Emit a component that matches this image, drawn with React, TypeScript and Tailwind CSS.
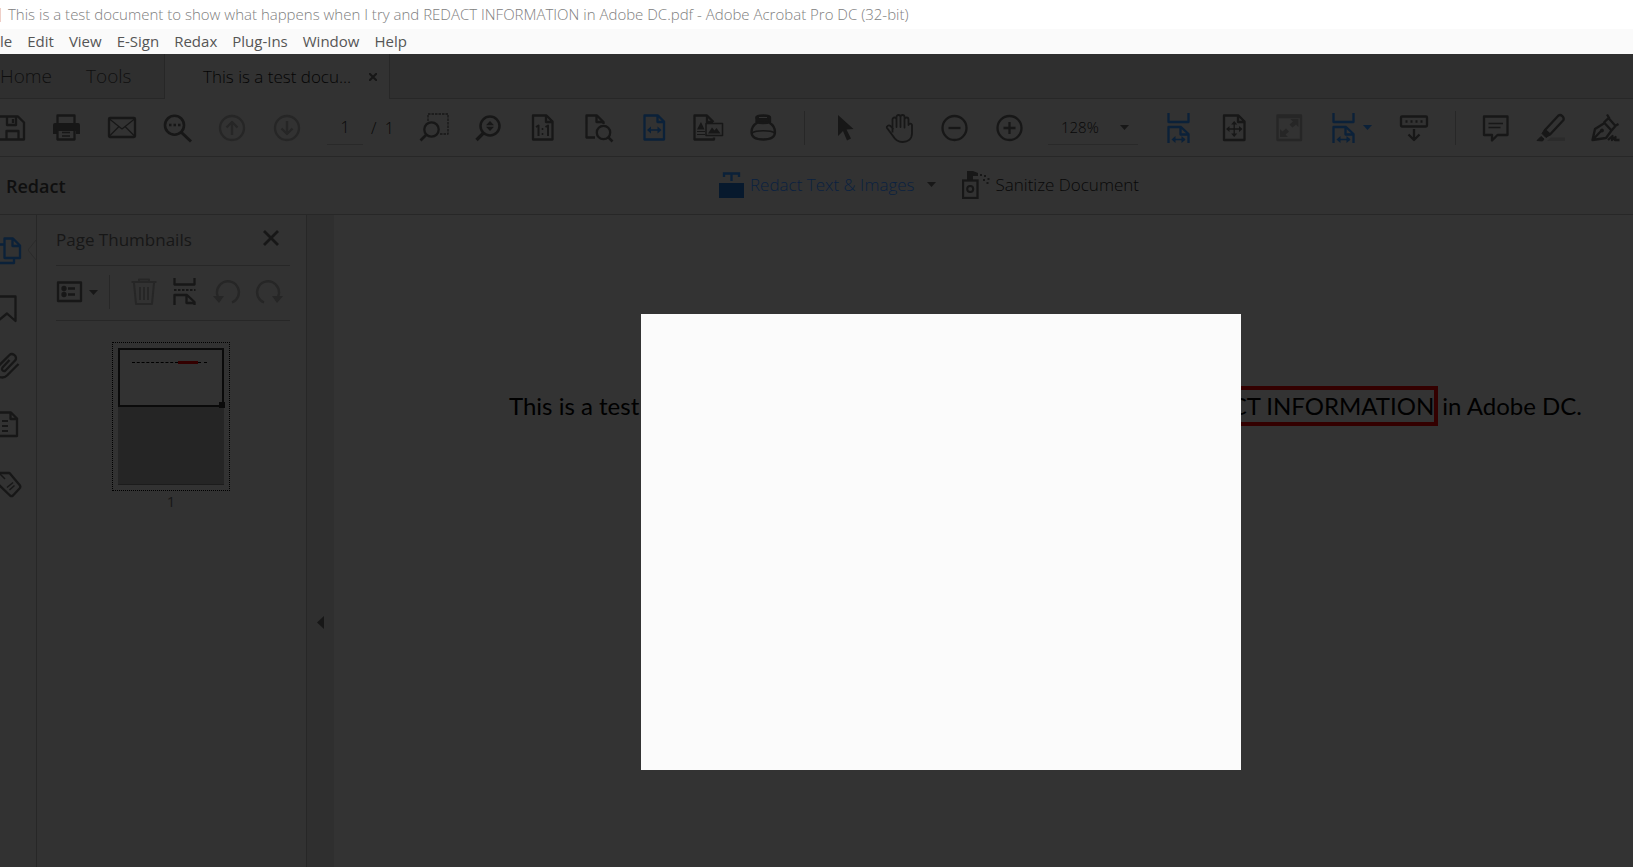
import React from "react";

interface IconProps {
  children: React.ReactNode;
  className?: string;
}

interface ToolProps extends IconProps {
  label: string;
  disabled?: boolean;
}

// Shared 32px line icon
const Icon: React.FC<IconProps> = ({ children, className = "" }) => (
  <svg
    className={`size-8 shrink-0 ${className}`}
    viewBox="0 0 32 32"
    fill="none"
    stroke="currentColor"
    strokeWidth="2.300"
    strokeLinejoin="round"
    aria-hidden="true"
  >
    {children}
  </svg>
);

const Tool: React.FC<ToolProps> = ({ label, children, className = "text-[#171717]", disabled }) => (
  <button type="button" aria-label={label} disabled={disabled} className={`flex w-[55px] shrink-0 items-center justify-center ${className}`}>
    <Icon>{children}</Icon>
  </button>
);

const Caret: React.FC<{ className?: string }> = ({ className = "text-[#171717]" }) => (
  <svg className={`h-[5px] w-[9px] shrink-0 ${className}`} viewBox="0 0 9 5" fill="currentColor" aria-hidden="true">
    <path d="M0 0h9L4.500 5z" />
  </svg>
);

const Divider = () => (
  <div className="flex w-[26px] shrink-0 items-center justify-center">
    <div className="h-[34px] w-px bg-[#272727]" />
  </div>
);

// Page cut by a break above it, used by both scrolling modes
const scrollPage = (
  <>
    <path d="M5.500 1v9h20V1M5.500 31V15H18l7.500 7V31M17.500 15v7.500h8" />
    <path d="M10 27.500h12" strokeWidth="1.500" />
    <path d="M8.500 27.500l4-3.500v7zM22.500 27.500l-4-3.500v7z" fill="currentColor" stroke="none" />
  </>
);

const menus = ["Edit", "View", "E-Sign", "Redax", "Plug-Ins", "Window", "Help"];

const TitleBar = () => (
  <header className="bg-white">
    <div className="flex h-[29px] items-center overflow-hidden whitespace-nowrap text-[15px] font-light text-[#808080]">
      <div className="h-[14px] w-px shrink-0 bg-[#efcfc8]" />
      <h1 className="ml-[7px]">
        This is a test document to show what happens when I try and REDACT INFORMATION in Adobe DC.pdf - Adobe Acrobat Pro DC (32-bit)
      </h1>
    </div>
    <nav className="flex h-[25px] items-center gap-[15px] overflow-hidden bg-[#fafafa] text-[15px] text-[#555]">
      <button type="button" aria-label="File">le</button>
      {menus.map((menu) => (
        <button type="button" key={menu} className="whitespace-nowrap">{menu}</button>
      ))}
    </nav>
  </header>
);

const Tabs = () => (
  <div className="flex h-[45px] bg-[#2f2f2f]">
    <div className="flex w-[165px] shrink-0 items-center gap-[34px] border-r border-b border-[#272727] text-[19px] font-light text-[#0f0f0f]">
      <button type="button">Home</button>
      <button type="button">Tools</button>
    </div>
    <div className="flex w-[224px] shrink-0 items-center justify-between bg-[#323232] pr-3 pl-[38px] text-[#050505]">
      <button type="button" className="whitespace-nowrap text-[17px] font-light">This is a test docu...</button>
      <button type="button" aria-label="Close tab">
        <svg className="size-2" viewBox="0 0 8 8" stroke="#171717" strokeWidth="2" aria-hidden="true">
          <path d="M0 0l8 8M8 0L0 8" />
        </svg>
      </button>
    </div>
    <div className="flex-1 border-b border-l border-[#272727]" />
  </div>
);

const Toolbar = () => (
  <div className="flex h-[58px] overflow-hidden border-b border-[#272727]">
    <div className="-ml-4 flex">
      <Tool label="Save">
        <path d="M2 4.500h20l6 6v17H2zM11 4.500V13h9V4.500M10.500 27.500V19h12v8.500" />
        <path d="M17 7v4" />
      </Tool>
      <Tool label="Print">
        <path d="M6.500 12V3.500h17V12" />
        <path d="M4 11h23a2 2 0 0 1 2 2v9h-4v-3H7v3H2v-9a2 2 0 0 1 2-2z" fill="currentColor" stroke="none" />
        <path d="M6.500 17v10.500h17V17" />
        <path d="M11 20.500h8M11 24h8" strokeWidth="1.500" />
      </Tool>
      <Tool label="Send by email">
        <rect x="3" y="6" width="26" height="19" rx="1" />
        <path d="M3.500 7L16 17 28.500 7M3.500 24l9.500-9.500M28.500 24L19 14.500" strokeWidth="1.200" />
      </Tool>
      <Tool label="Find">
        <circle cx="13.500" cy="13.200" r="9.500" strokeWidth="2.600" />
        <path d="M20.500 20.500l9.500 9" strokeWidth="3" />
        <path d="M8 13h2.500M12.500 13H15M17 13h2.500" strokeWidth="2.500" />
      </Tool>
      <Tool label="Previous page" disabled className="text-[#262626]">
        <circle cx="16" cy="16" r="12" />
        <path d="M16 23V10M10.500 15.500L16 10l5.500 5.500" />
      </Tool>
      <Tool label="Next page" disabled className="text-[#262626]">
        <circle cx="16" cy="16" r="12" />
        <path d="M16 9v13M10.500 16.500L16 22l5.500-5.500" />
      </Tool>
    </div>
    <div className="flex w-[92px] shrink-0 items-center gap-2 pl-[13px] text-base font-light text-[#080808]">
      <input aria-label="Page number" defaultValue="1" className="h-[34px] w-9 border-b border-[#292929] text-center" />
      <span className="whitespace-pre">/  1</span>
    </div>
    <Tool label="Marquee zoom">
      <path d="M10 9V2h20v20h-8" strokeWidth="1.300" strokeDasharray="2.500 1" />
      <circle cx="13.500" cy="17.500" r="7.200" />
      <path d="M8.500 22.500L2.500 28.500" strokeWidth="2.600" />
    </Tool>
    <Tool label="Dynamic zoom">
      <circle cx="17" cy="14" r="9.500" strokeWidth="2.500" />
      <path d="M10.500 21L3.500 28" strokeWidth="3.200" />
      <path d="M17 9l4 4.200h-8zM17 19l4-4.200h-8z" fill="currentColor" stroke="none" />
    </Tool>
    <Tool label="Actual size">
      <path d="M5 3.500h13.500l6 6v18H5zM18 3.500V10h6.500" />
      <path d="M8 15l2.500-1.500V24M17.500 15l2.500-1.500V24" strokeWidth="2" />
      <path d="M14.500 16v2M14.500 21v2" strokeWidth="1.500" />
    </Tool>
    <Tool label="Zoom to page level">
      <path d="M12 25.500H3.500v-22H14l6.500 6.500v2M13.500 3.500V10H20" />
      <circle cx="20.500" cy="20.500" r="6.700" />
      <path d="M25 25l4.500 4.500" strokeWidth="2.500" />
    </Tool>
    <Tool label="Fit width" className="text-[#0b2139]">
      <path d="M6.500 3.500H20l6 6v18H6.500zM19.500 3.500V10H26" />
      <path d="M11 18h10.500" strokeWidth="1.500" />
      <path d="M9 18l4-3.500v7zM23.500 18l-4-3.500v7z" fill="currentColor" stroke="none" />
    </Tool>
    <Tool label="Reflow">
      <path d="M21 25.500v2H1.500v-24H14l6.500 6.500M14 3.500V10h6" />
      <path d="M4 17.500L8 10l3.500 7.500z" fill="currentColor" stroke="none" />
      <path d="M4 19.500h8M4 22.500h8" strokeWidth="1.200" />
      <rect x="13" y="11.500" width="16.500" height="12" strokeWidth="1.500" />
      <path d="M15 21.500l4-6 2.500 3 2-2.500 4 5.500z" fill="currentColor" stroke="none" />
    </Tool>
    <Tool label="Ink">
      <ellipse cx="15.200" cy="5.500" rx="6.700" ry="2" />
      <path d="M8.500 5.500V10c3 1.500 10.500 1.500 13.500 0V5.500z" fill="currentColor" />
      <path d="M9.500 10.500C5 13 3.500 16 3.500 20c0 5 4 7.500 11.700 7.500S27 25 27 20c0-4-1.500-7-6-9.500" />
      <path d="M4 21c4-3 18.500-3 23 0" strokeWidth="1.500" />
      <path d="M11 5.500h8" stroke="#323232" strokeWidth="1" />
    </Tool>
    <Divider />
    <Tool label="Select">
      <path d="M9 3l15.500 14-7 .5 4.500 9-4 2-4-9.500L9 24z" fill="currentColor" stroke="none" />
    </Tool>
    <Tool label="Hand">
      <path
        d="M8.500 20.500V7.500a2 2 0 0 1 4 0V15 5a2 2 0 0 1 4 0v10V5a2 2 0 0 1 4 0v10.500-8a2 2 0 0 1 4 0V13a1.800 1.800 0 0 1 3.500 0v8c0 6-4 9-9.500 9-5 0-7.500-2.500-9.500-6l-6-8c-1-1.500 1.500-3.500 3.500-2l3 3.500"
        strokeWidth="1.800"
      />
    </Tool>
    <Tool label="Zoom out">
      <circle cx="15.500" cy="16" r="12" />
      <path d="M9.500 16h12" />
    </Tool>
    <Tool label="Zoom in">
      <circle cx="15.500" cy="16" r="12" />
      <path d="M9.500 16h12M15.500 10v12" />
    </Tool>
    <div className="flex w-[114px] shrink-0 items-center pl-[11px]">
      <button type="button" aria-label="Zoom level" className="flex h-[34px] w-[90px] items-center justify-between border-b border-[#292929] pr-[9px] pl-[13px] text-[15px] font-light text-[#080808]">
        128%
        <Caret />
      </button>
    </div>
    <Tool label="Fit width scrolling" className="text-[#0b2139]">{scrollPage}</Tool>
    <Tool label="Fit page">
      <path d="M6 3.500h14.500l6 6V28H6zM20 3.500V10h6.500" />
      <path d="M10.500 17H22M16.200 11v12" strokeWidth="1.300" />
      <path d="M8 17l3.500-3v6zM24.500 17L21 14v6zM16.200 9l3 3.500h-6zM16.200 25l3-3.500h-6z" fill="currentColor" stroke="none" />
    </Tool>
    <Tool label="Full screen" disabled className="text-[#262626]">
      <path d="M4.500 3.500H28v24.500H4.500zM4.500 5H28" />
      <path d="M25.500 7v8L23 12.500l-3.500 3-3-3 3.500-3L17.500 7zM7 25v-8l2.500 2.500 3.500-3 3 3-3.500 3L15 25z" fill="currentColor" stroke="none" />
    </Tool>
    <button type="button" aria-label="Scrolling mode" className="flex w-[71px] shrink-0 items-center gap-[3px] pl-3 text-[#0b2139]">
      <Icon>{scrollPage}</Icon>
      <Caret className="text-[#0b2139]" />
    </button>
    <Tool label="Show toolbar below">
      <rect x="2" y="4.500" width="26" height="10" rx="1" />
      <path d="M6.500 9.500h19" strokeDasharray="2 3" />
      <path d="M15 17v11M9.500 22.500L15 28l5.500-5.500" />
    </Tool>
    <Divider />
    <Tool label="Comment">
      <path d="M4 4.500h23.500v18.500h-10L12 28.500V23H4z" />
      <path d="M8.500 11.500H23M8.500 15.500h12" strokeWidth="1.300" />
    </Tool>
    <Tool label="Highlight">
      <path d="M16 25.500h14v3.500H12z" fill="#2b2b2b" stroke="none" />
      <path d="M10 18L23.500 3.500c2.500-1.500 6 1.500 5 4.500L15 22.500z" />
      <path d="M9.500 17.500l5.500 5.500-4 2.500-4-4zM2 28.500l4-4 3 2.500-1.500 2z" fill="currentColor" strokeWidth="1" />
    </Tool>
    <Tool label="Sign">
      <path d="M2.500 28L5 17l9.500-6 7 7.500L16 26zM2.500 28l9-9.500M13.500 11l5-5 7 8-4 4.500M17 2.500l2.500 4M25 14l3.500-2" />
      <circle cx="12" cy="18.500" r="1.500" fill="currentColor" strokeWidth="1" />
      <path d="M18 28l4.500-4-.5 4 3.500-3-.5 3h4.500" />
    </Tool>
  </div>
);

const RedactBar = () => (
  <div className="flex h-[58px] items-center border-b border-[#272727] text-[17px]">
    <h2 className="w-[225px] shrink-0 pl-[6px] text-lg font-semibold text-[#0f0f0f]">Redact</h2>
    <div className="flex flex-1 items-center justify-center gap-[26px] pb-0.5 font-light whitespace-nowrap">
      <button type="button" className="flex items-center gap-[6px] text-[#0a2140]">
        <svg className="h-[26px] w-[25px]" viewBox="0 0 25 26" aria-hidden="true">
          <path d="M5 5V1.500h15V5M12.500 1.500V9" fill="none" stroke="#0b2139" strokeWidth="2.300" />
          <path d="M0 11h25v15H0z" fill="#07192d" />
        </svg>
        Redact Text &amp; Images
        <span className="pl-[6px]"><Caret /></span>
      </button>
      <button type="button" className="flex items-center gap-[6px] text-[#080808]">
        <svg className="h-7 w-7" viewBox="0 0 28 28" aria-hidden="true">
          <path d="M5 0h6l5 2v3h-5v4H5z" fill="#171717" />
          <rect x="1" y="9.500" width="14.500" height="17.500" fill="none" stroke="#171717" strokeWidth="2.300" />
          <circle cx="8.200" cy="18" r="3" fill="none" stroke="#171717" strokeWidth="2" />
          <path d="M18 4h2M22 5h2M21 9h2M25.500 8h2M24.500 12h2" stroke="#171717" strokeWidth="2" />
        </svg>
        Sanitize Document
      </button>
    </div>
  </div>
);

const Rail = () => (
  <nav className="relative flex w-[37px] shrink-0 flex-col overflow-hidden border-r border-[#272727] pt-[7px] text-[#171717]">
    <button type="button" aria-label="Page thumbnails" className="flex h-[58px] w-8 shrink-0 items-center text-[#0b2139]">
      <Icon className="-ml-2">
        <path d="M12.500 3.500H21l7 7v12.500H12.500zM20.500 3.500V11H28M12 9.500H2M22 23v5H2" />
      </Icon>
    </button>
    <button type="button" aria-label="Bookmarks" className="flex h-[58px] w-8 shrink-0 items-center">
      <Icon className="-ml-2">
        <path d="M6 3.500h17.500V28L15 20.500 6 28z" />
      </Icon>
    </button>
    <button type="button" aria-label="Attachments" className="flex h-[58px] w-8 shrink-0 items-center">
      <Icon className="-ml-2">
        <path d="M26.500 13L15 24.500C12 27.500 6.500 27 5 23.500s-1-6 1.500-8.500L17.500 4c2.500-2.500 8 .5 6 5L13.500 19.500c-2 1.500-4.500-.5-3-3l7-7.500" />
      </Icon>
    </button>
    <button type="button" aria-label="Content" className="flex h-[58px] w-8 shrink-0 items-center">
      <Icon className="-ml-2">
        <path d="M2 3.500h17l6 6V27H2zM18.500 3.500V10H25" />
        <path d="M10 12h6M10 17h6M10 22h6" strokeWidth="1.800" />
      </Icon>
    </button>
    <button type="button" aria-label="Tags" className="flex h-[58px] w-8 shrink-0 items-center">
      <Icon className="-ml-2">
        <path d="M2 10l6-4h9.500L28 18.500c.5 1 .5 2-.5 3L21 28.500c-1 .8-2 .8-3 0L2 13" />
        <path d="M8 7l5 5M15 20.500l6-5M17.500 23l5-4.500" strokeWidth="1.500" />
      </Icon>
    </button>
    <svg className="absolute top-[25px] right-0 h-5 w-2" viewBox="0 0 8 20" fill="none" stroke="#2b2b2b" aria-hidden="true">
      <path d="M8 0L0 10l8 10" />
    </svg>
  </nav>
);

const Thumbnails = () => (
  <aside className="flex w-[270px] shrink-0 flex-col border-r border-[#272727] pr-4 pl-[19px]">
    <div className="flex h-[51px] items-center justify-between border-b border-[#272727] pr-[11px]">
      <h3 className="text-[17px] text-[#171717]">Page Thumbnails</h3>
      <button type="button" aria-label="Close panel" className="pb-1">
        <svg className="size-4" viewBox="0 0 16 16" stroke="#171717" strokeWidth="2.800" aria-hidden="true">
          <path d="M1 1l14 14M15 1L1 15" />
        </svg>
      </button>
    </div>
    <div className="flex h-[55px] items-center border-b border-[#272727] pb-0.5 text-[#171717]">
      <button type="button" aria-label="Options" className="-ml-[3px] flex items-center">
        <Icon>
          <path d="M5 6.500h23v18.500H5z" />
          <path d="M15 12.500h7M15 18.500h7" />
          <circle cx="11" cy="12.500" r="1.500" fill="currentColor" />
          <circle cx="11" cy="18.500" r="1.500" fill="currentColor" />
        </Icon>
        <Caret className="ml-1 text-[#171717]" />
      </button>
      <div className="ml-[11px] h-[34px] w-px bg-[#272727]" />
      <div className="ml-[17px] flex gap-[10px]">
        <button type="button" aria-label="Delete pages" disabled className="text-[#262626]">
          <Icon>
            <path d="M4.500 6h25M12 6V3.500h10V6M7 7l2 21h16l2-21M13 11v13M17 11v13M21 11v13" strokeWidth="2" />
          </Icon>
        </button>
        <button type="button" aria-label="Insert page">
          <Icon>
            <path d="M5.500 2v6.500h20V2M5.500 29V19H18l7.500 7v3M17.500 19v8h8" />
            <path d="M5 14h21.500" strokeWidth="2" strokeDasharray="2.500 1.500" />
          </Icon>
        </button>
        <button type="button" aria-label="Rotate left" disabled className="text-[#262626]">
          <Icon>
            <path d="M21 26.500A11 11 0 1 0 7 21" />
            <path d="M2 20h11l-5 7z" fill="currentColor" stroke="none" />
          </Icon>
        </button>
        <button type="button" aria-label="Rotate right" disabled className="text-[#262626]">
          <Icon>
            <path d="M11 26.500A11 11 0 1 1 25 21" />
            <path d="M30 20H19l5 7z" fill="currentColor" stroke="none" />
          </Icon>
        </button>
      </div>
    </div>
    <figure className="mt-[21px] flex flex-col items-center pr-1">
      <div className="w-[118px] border border-dotted border-black p-[5px]">
        <div className="relative h-[59px] border-2 border-[#0a0a0a]">
          <div className="mt-[11px] ml-3 flex h-[3px] w-[75px] items-center">
            <div className="h-px flex-1 border-t border-dashed border-black" />
            <div className="h-[3px] w-5 bg-[#330000]" />
            <div className="h-px w-[9px] border-t border-dashed border-black" />
          </div>
          <div className="absolute -right-[3px] -bottom-[3px] size-[6px] bg-[#0a0a0a]" />
        </div>
        <div className="h-[78px] border-b border-[#1c1c1c] bg-[#252525]" />
      </div>
      <figcaption className="text-[15px] leading-5 text-[#171717]">1</figcaption>
    </figure>
  </aside>
);

const Document = () => (
  <main className="min-w-0 flex-1 overflow-hidden bg-[#333] pt-[171px] pl-[175px]">
    <p className="flex w-[1073px] items-center justify-between font-[Lato,sans-serif] text-2xl whitespace-nowrap text-black">
      <span>This is a test document to show what happens when I try and</span>
      <span className="flex items-center gap-1">
        <span className="flex h-10 items-center border-4 border-[#330000]">REDACT INFORMATION</span>
        <span>in Adobe DC.</span>
      </span>
    </p>
  </main>
);

const App = () => (
  <div className="relative flex h-screen flex-col overflow-hidden bg-[#323232] font-['Open_Sans',sans-serif]">
    <TitleBar />
    <Tabs />
    <Toolbar />
    <RedactBar />
    <div className="flex min-h-0 flex-1">
      <Rail />
      <Thumbnails />
      <div className="flex w-[27px] shrink-0 items-center bg-[#2f2f2f]">
        <button type="button" aria-label="Collapse panel" className="mt-[162px] ml-[10px]">
          <svg className="h-[13px] w-[7px]" viewBox="0 0 7 13" fill="#171717" aria-hidden="true">
            <path d="M7 0v13L0 6.500z" />
          </svg>
        </button>
      </div>
      <Document />
    </div>
    <div role="dialog" aria-label="Loading" className="absolute top-[314px] left-[641px] h-[456px] w-[600px] bg-[#fbfbfb]" />
  </div>
);

export default App;
